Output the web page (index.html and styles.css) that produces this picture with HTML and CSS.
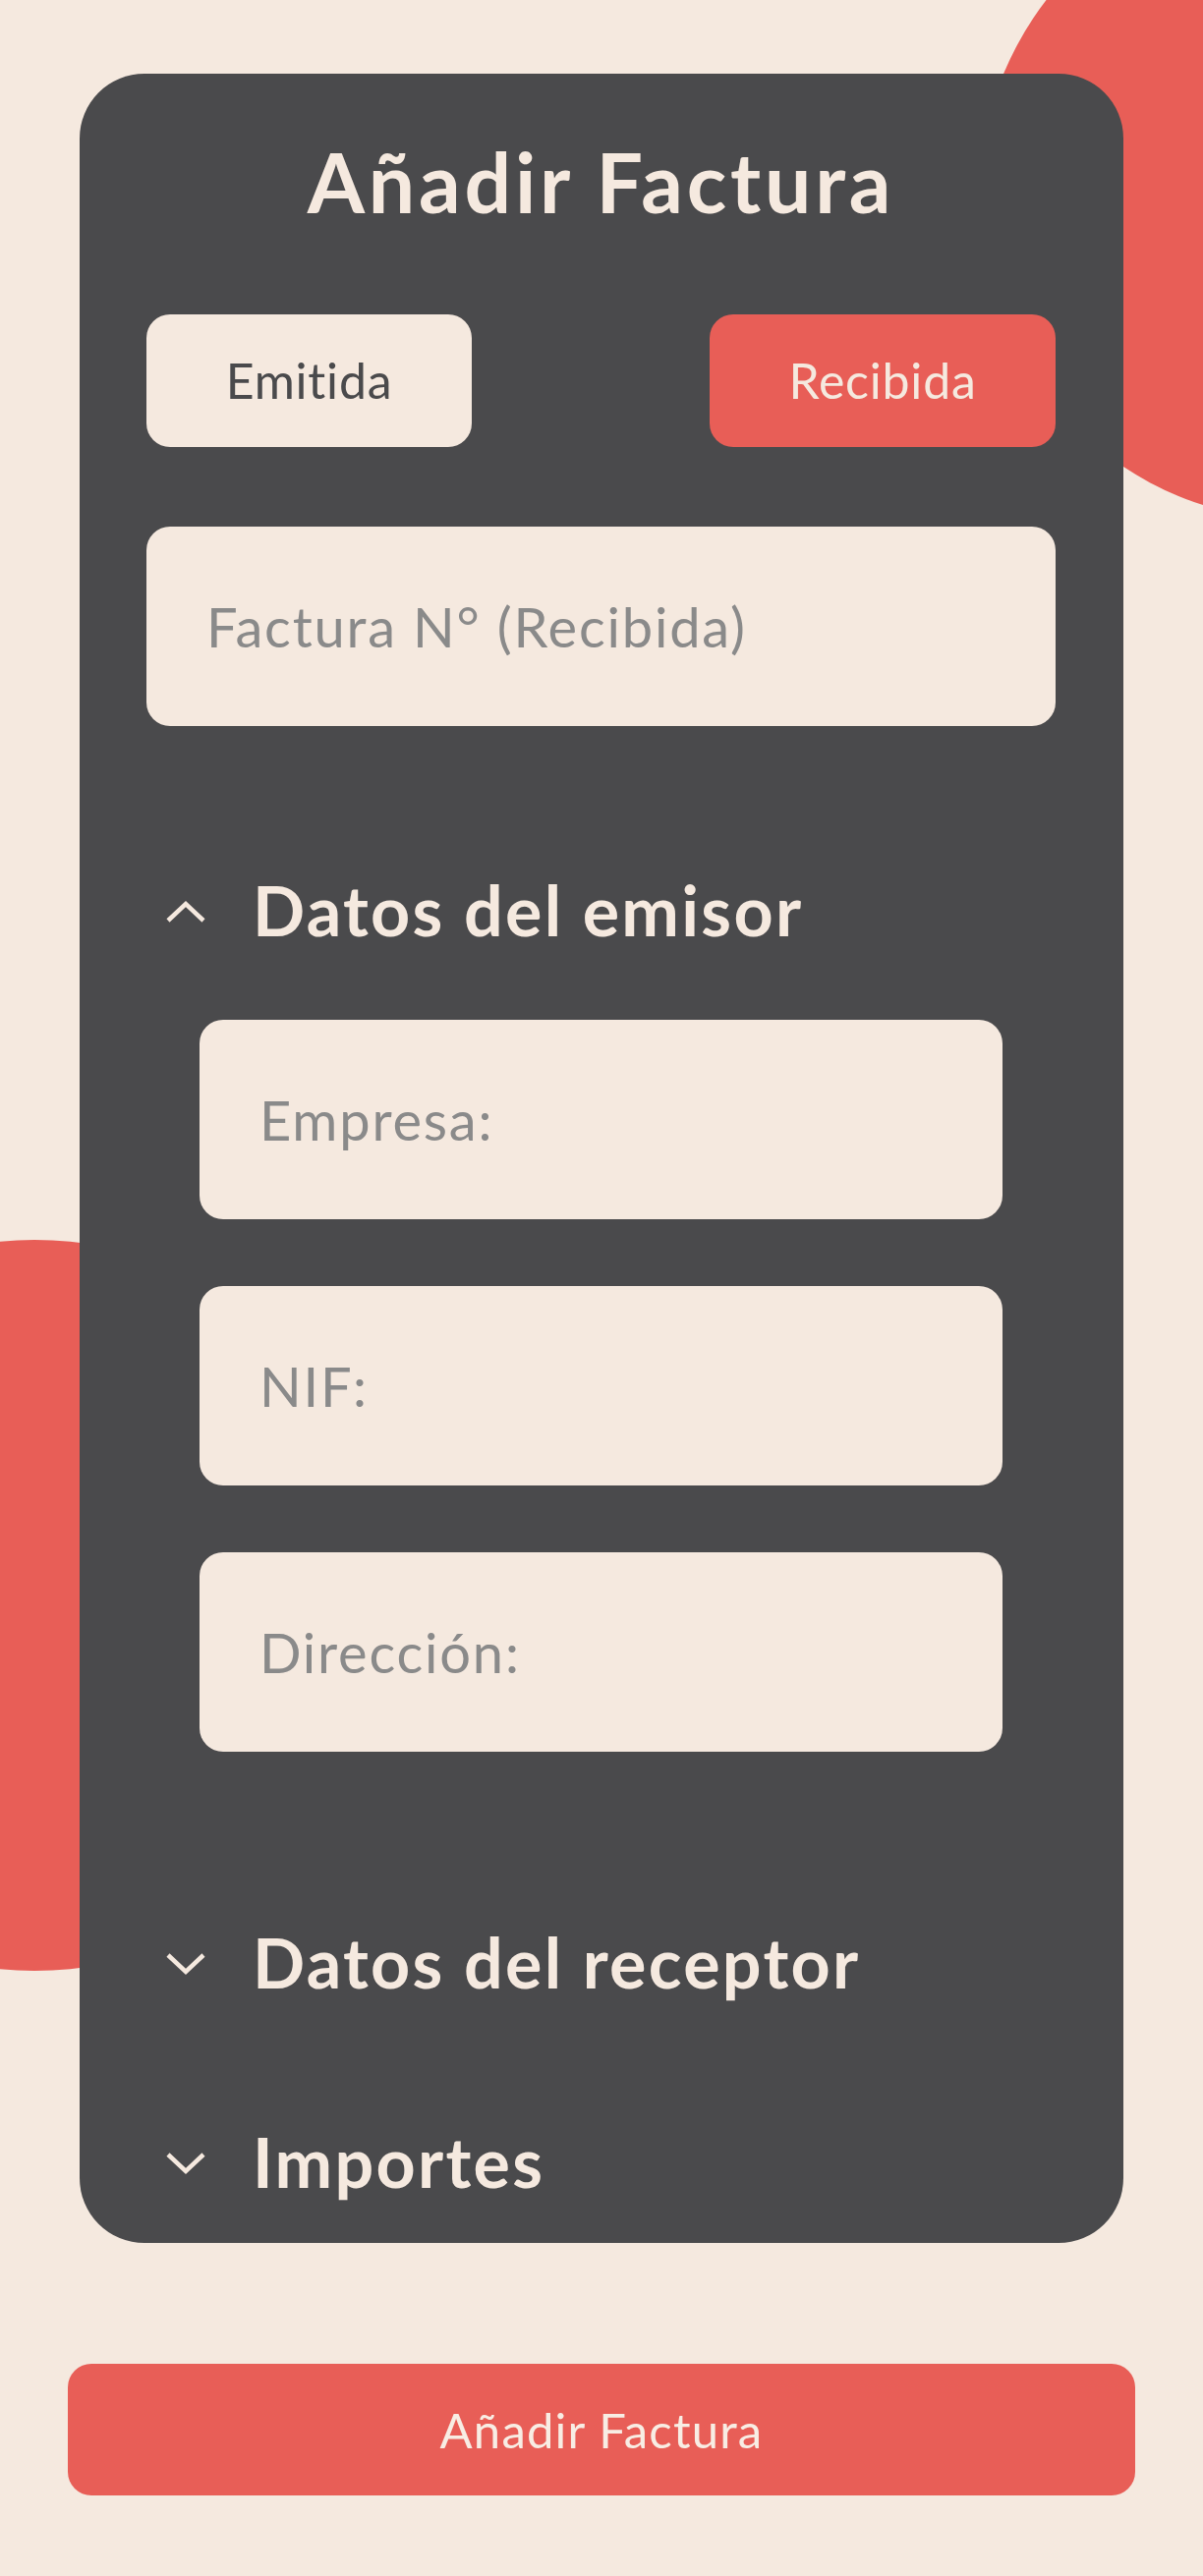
FILE: index.html
```html
<!DOCTYPE html>
<html lang="es">
<head>
<meta charset="utf-8">
<title>Añadir Factura</title>
<link rel="stylesheet" href="styles.css">
</head>
<body>
<div class="page">
  <div class="blob blob-top"></div>
  <div class="blob blob-left"></div>

  <main class="card">
    <h1 class="title">Añadir Factura</h1>

    <div class="toggle">
      <button class="toggle-btn toggle-btn--off">Emitida</button>
      <button class="toggle-btn toggle-btn--on">Recibida</button>
    </div>

    <div class="field field--main">Factura N° (Recibida)</div>

    <section class="section section--emisor">
      <div class="section-head">
        <svg class="chevron" viewBox="0 0 40 24" width="40" height="24"><path d="M2 21 L20 4 L38 21" fill="none" stroke="currentColor" stroke-width="4.5"/></svg>
        <span class="section-title">Datos del emisor</span>
      </div>
      <div class="section-body">
        <div class="field">Empresa:</div>
        <div class="field">NIF:</div>
        <div class="field">Dirección:</div>
      </div>
    </section>

    <section class="section section--receptor">
      <div class="section-head">
        <svg class="chevron" viewBox="0 0 40 24" width="40" height="24"><path d="M2 3 L20 20 L38 3" fill="none" stroke="currentColor" stroke-width="4.5"/></svg>
        <span class="section-title">Datos del receptor</span>
      </div>
    </section>

    <section class="section section--importes">
      <div class="section-head">
        <svg class="chevron" viewBox="0 0 40 24" width="40" height="24"><path d="M2 3 L20 20 L38 3" fill="none" stroke="currentColor" stroke-width="4.5"/></svg>
        <span class="section-title">Importes</span>
      </div>
    </section>
  </main>

  <button class="submit">Añadir Factura</button>
</div>
</body>
</html>
```

FILE: styles.css
```css
* { box-sizing: border-box; }

html, body {
  margin: 0;
  padding: 0;
  background: #f5e9df;
}

body {
  font-family: Lato, "Open Sans", sans-serif;
  font-variant-ligatures: none;
  color: #f5e9df;
}

.page {
  position: relative;
  min-height: 2622px;
  overflow: hidden;
  padding-top: 75px;
}

.blob {
  position: absolute;
  border-radius: 50%;
  background: #e85e57;
  z-index: 0;
}

.blob-top {
  left: 996px;
  top: -128px;
  width: 658px;
  height: 658px;
}

.blob-left {
  left: -337px;
  top: 1262px;
  width: 744px;
  height: 744px;
}

.card {
  position: relative;
  z-index: 1;
  width: 1062px;
  height: 2208px;
  margin: 0 auto;
  background: #4a4a4c;
  border-radius: 66px;
  padding: 60px 69px 0 68px;
}

.title {
  margin: 0;
  font-size: 84px;
  line-height: 1.2;
  font-weight: 700;
  letter-spacing: 3.8px;
  text-align: center;
  color: #f5e9df;
}

.toggle {
  display: flex;
  justify-content: space-between;
  margin-top: 84px;
}

.toggle-btn {
  height: 135px;
  border: none;
  border-radius: 24px;
  font-family: inherit;
  font-variant-ligatures: none;
  font-size: 50px;
  font-weight: 400;
  letter-spacing: 0.8px;
  padding: 0;
}

.toggle-btn--off {
  width: 331px;
  background: #f5e9df;
  color: #4a4a4c;
}

.toggle-btn--on {
  width: 352px;
  background: #e85e57;
  color: #f5e9df;
}

.field {
  display: flex;
  align-items: center;
  height: 203px;
  background: #f5e9df;
  border-radius: 24px;
  padding-left: 61px;
  font-size: 56px;
  letter-spacing: 1.8px;
  color: #8a8a8a;
}

.field--main {
  margin-top: 81px;
}

.section--emisor { margin-top: 145px; }
.section--receptor { margin-top: 172px; }
.section--importes { margin-top: 119px; }

.section-head {
  display: flex;
  align-items: center;
  height: 84px;
}

.chevron {
  flex: none;
  margin-left: 20px;
  margin-right: 48px;
  margin-top: 4px;
  color: #f5e9df;
}

.section-title {
  font-size: 70px;
  font-weight: 700;
  line-height: 1.2;
  letter-spacing: 2.3px;
  color: #f5e9df;
}

.section-body {
  display: flex;
  flex-direction: column;
  gap: 68px;
  margin-top: 70px;
  padding: 0 54px;
}

.submit {
  display: block;
  position: relative;
  z-index: 1;
  width: 1086px;
  height: 134px;
  margin: 123px auto 0;
  border: none;
  border-radius: 24px;
  background: #e85e57;
  color: #f8ede4;
  font-family: inherit;
  font-variant-ligatures: none;
  font-size: 49px;
  font-weight: 400;
  letter-spacing: 1.2px;
}
```
